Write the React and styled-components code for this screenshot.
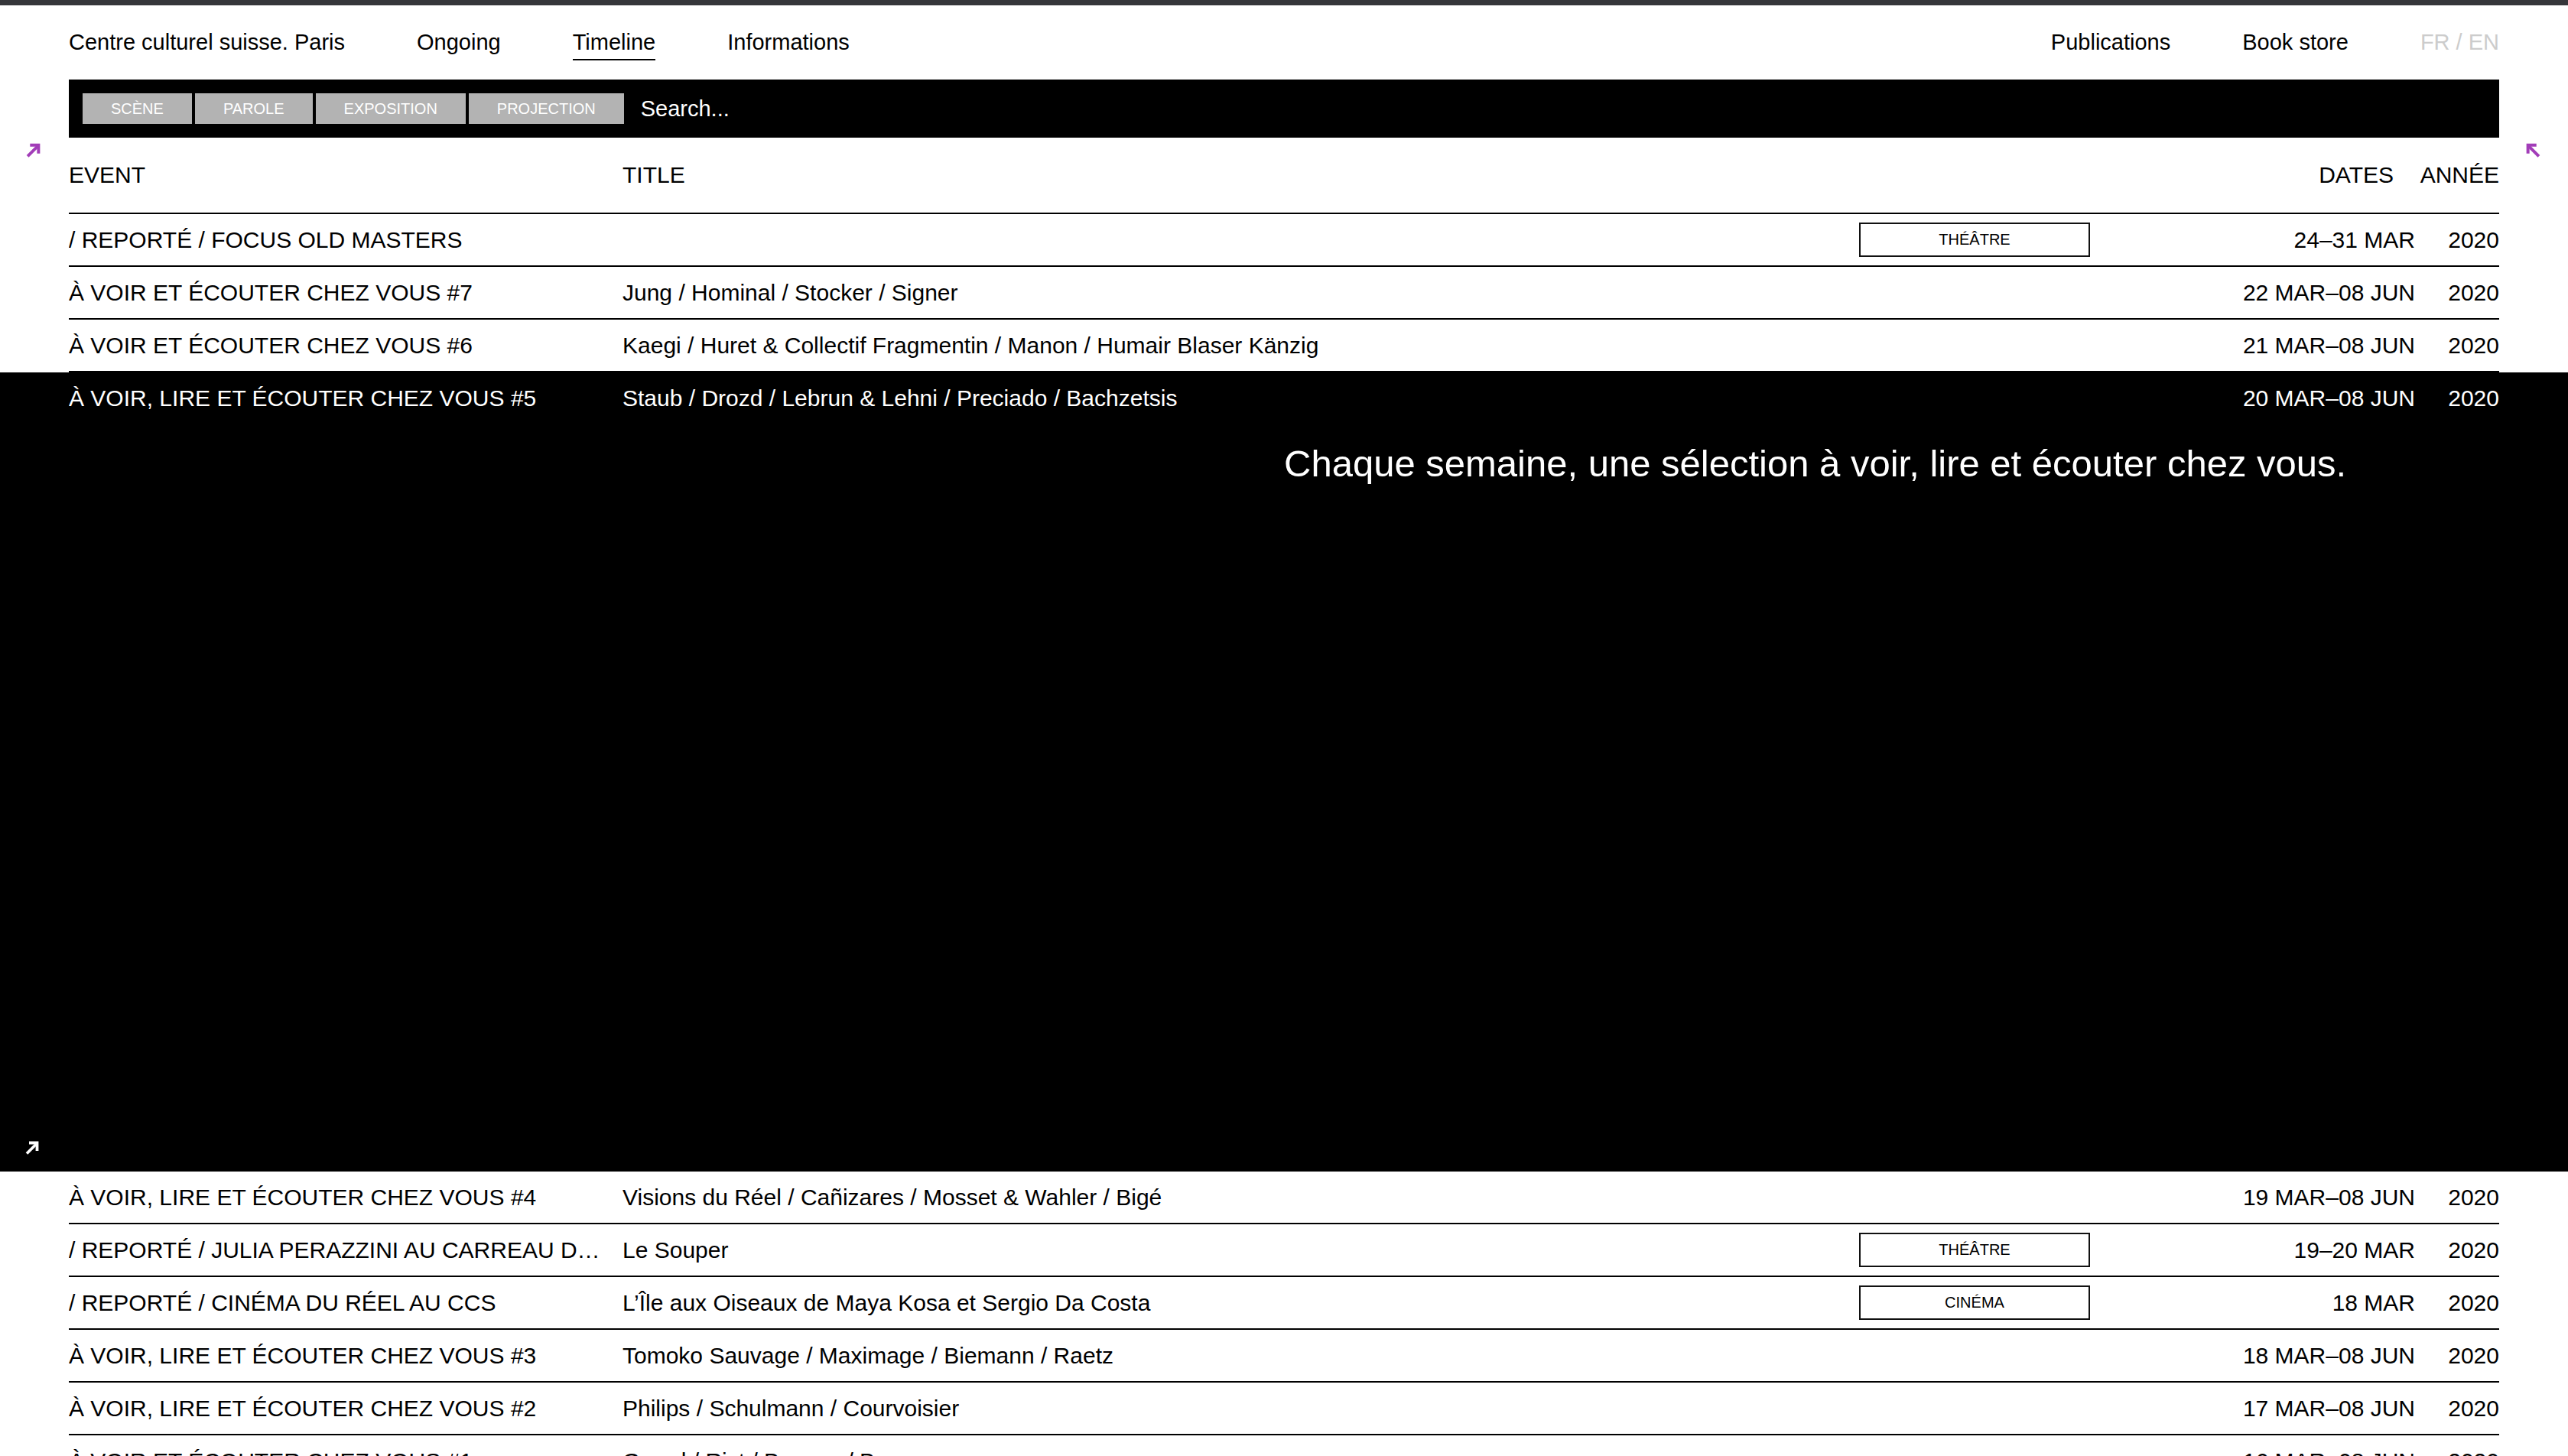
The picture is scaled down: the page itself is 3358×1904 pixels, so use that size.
import React from 'react';
import styled, { createGlobalStyle } from 'styled-components';

const GlobalStyle = createGlobalStyle`
  html, body {
    margin: 0;
    overflow: hidden;
    background: #fff;
  }
  body {
    font-family: "Liberation Sans", Arial, sans-serif;
    color: #000;
  }
  * {
    box-sizing: border-box;
  }
`;

const TopStrip = styled.div`
  height: 7px;
  background-color: #35363a;
`;

const Page = styled.div`
  position: relative;
  padding: 0 90px;
`;

const Nav = styled.nav`
  display: flex;
  justify-content: space-between;
  padding-top: 32px;
`;

const NavGroup = styled.div`
  display: flex;
  gap: 94px;
`;

const NavLink = styled.a`
  font-size: 29px;
  line-height: 33px;
  padding-bottom: 5px;
  border-bottom: 2px solid ${p => (p.$active ? '#000' : 'transparent')};
  color: ${p => (p.$muted ? '#cccccc' : '#000')};
  text-decoration: none;
  cursor: pointer;
`;

const SearchBar = styled.div`
  display: flex;
  align-items: center;
  gap: 4px;
  margin-top: 25px;
  height: 76px;
  padding: 0 18px;
  background-color: #000;
`;

const FilterButton = styled.button`
  height: 40px;
  padding: 0 37px;
  border: none;
  background-color: #b3b3b3;
  color: #fff;
  font-family: inherit;
  font-size: 20px;
  text-transform: uppercase;
`;

const SearchInput = styled.input`
  flex: 1;
  margin-left: 16px;
  border: none;
  background: transparent;
  color: #fff;
  font-family: inherit;
  font-size: 29px;
  outline: none;
  &::placeholder {
    color: #fff;
    opacity: 1;
  }
`;

const Corner = styled.svg`
  position: absolute;
  top: 180px;
  width: 19px;
  height: 19px;
  ${p => (p.$side === 'right' ? 'right: 36px;' : 'left: 34px;')}
`;

const Grid = styled.div`
  display: grid;
  grid-template-columns: 724px 1fr 302px 425px 110px;
  align-items: center;
  font-size: 30px;
  border-bottom: 2px solid #000;
`;

const HeaderRow = styled(Grid)`
  height: 100px;
`;

const Row = styled(Grid)`
  height: 69px;
`;

const Cell = styled.div`
  white-space: nowrap;
  overflow: hidden;
  text-overflow: ellipsis;
  padding-right: ${p => p.$pad || 0}px;
  text-align: ${p => (p.$right ? 'right' : 'left')};
`;

const Tag = styled.div`
  display: flex;
  align-items: center;
  justify-content: center;
  height: 45px;
  border: 2px solid #111;
  font-size: 20px;
  text-transform: uppercase;
`;

const Expanded = styled.div`
  position: relative;
  margin: 0 -90px;
  padding: 0 90px;
  height: 1045px;
  background-color: #000;
  color: #fff;
`;

const Description = styled.p`
  margin: 21px 0 0;
  padding-left: 50%;
  font-size: 49px;
  line-height: 1.2;
`;

const OpenArrow = styled.svg`
  position: absolute;
  left: 33px;
  bottom: 22px;
  width: 18px;
  height: 18px;
`;

function Arrow({ color, flip, as: Comp, ...rest }) {
  return (
    <Comp viewBox="0 0 18 18" {...rest}>
      <g
        fill="none"
        stroke={color}
        strokeWidth="3.8"
        transform={flip ? 'translate(18 0) scale(-1 1)' : undefined}
      >
        <path d="M2 16.5 L15 3.5" />
        <path d="M5 2.5 H15.5 V13" />
      </g>
    </Comp>
  );
}

const events = [
  { event: '/ REPORTÉ / FOCUS OLD MASTERS', title: '', tag: 'Théâtre', dates: '24–31 MAR' },
  { event: 'À VOIR ET ÉCOUTER CHEZ VOUS #7', title: 'Jung / Hominal / Stocker / Signer', dates: '22 MAR–08 JUN' },
  {
    event: 'À VOIR ET ÉCOUTER CHEZ VOUS #6',
    title: 'Kaegi / Huret & Collectif Fragmentin / Manon / Humair Blaser Känzig',
    dates: '21 MAR–08 JUN'
  },
  {
    event: 'À VOIR, LIRE ET ÉCOUTER CHEZ VOUS #5',
    title: 'Staub / Drozd / Lebrun & Lehni / Preciado / Bachzetsis',
    dates: '20 MAR–08 JUN',
    open: true,
    text: 'Chaque semaine, une sélection à voir, lire et écouter chez vous.'
  },
  {
    event: 'À VOIR, LIRE ET ÉCOUTER CHEZ VOUS #4',
    title: 'Visions du Réel / Cañizares / Mosset & Wahler / Bigé',
    dates: '19 MAR–08 JUN'
  },
  {
    event: '/ REPORTÉ / JULIA PERAZZINI AU CARREAU DU TEMPLE',
    title: 'Le Souper',
    tag: 'Théâtre',
    dates: '19–20 MAR'
  },
  {
    event: '/ REPORTÉ / CINÉMA DU RÉEL AU CCS',
    title: 'L’Île aux Oiseaux de Maya Kosa et Sergio Da Costa',
    tag: 'Cinéma',
    dates: '18 MAR'
  },
  {
    event: 'À VOIR, LIRE ET ÉCOUTER CHEZ VOUS #3',
    title: 'Tomoko Sauvage / Maximage / Biemann / Raetz',
    dates: '18 MAR–08 JUN'
  },
  {
    event: 'À VOIR, LIRE ET ÉCOUTER CHEZ VOUS #2',
    title: 'Philips / Schulmann / Courvoisier',
    dates: '17 MAR–08 JUN'
  },
  {
    event: 'À VOIR ET ÉCOUTER CHEZ VOUS #1',
    title: 'Grand / Rist / Besson / Baumann',
    dates: '16 MAR–08 JUN'
  }
];

function EventRow({ item }) {
  return (
    <Row>
      <Cell $pad={12}>{item.event}</Cell>
      <Cell $pad={30}>{item.title}</Cell>
      <div>{item.tag && <Tag>{item.tag}</Tag>}</div>
      <Cell $right>{item.dates}</Cell>
      <Cell $right>2020</Cell>
    </Row>
  );
}

export default function App() {
  return (
    <>
      <GlobalStyle />
      <TopStrip />
      <Page>
        <Nav>
          <NavGroup>
            <NavLink>Centre culturel suisse. Paris</NavLink>
            <NavLink>Ongoing</NavLink>
            <NavLink $active>Timeline</NavLink>
            <NavLink>Informations</NavLink>
          </NavGroup>
          <NavGroup>
            <NavLink>Publications</NavLink>
            <NavLink>Book store</NavLink>
            <NavLink $muted>FR / EN</NavLink>
          </NavGroup>
        </Nav>

        <SearchBar>
          {['Scène', 'Parole', 'Exposition', 'Projection'].map(f => (
            <FilterButton key={f}>{f}</FilterButton>
          ))}
          <SearchInput placeholder="Search..." />
        </SearchBar>

        <Arrow as={Corner} color="#a23db8" />
        <Arrow as={Corner} $side="right" color="#a23db8" flip />

        <HeaderRow>
          <Cell>EVENT</Cell>
          <Cell>TITLE</Cell>
          <div />
          <Cell $right $pad={28}>DATES</Cell>
          <Cell $right>ANNÉE</Cell>
        </HeaderRow>

        {events.map(item =>
          item.open ? (
            <Expanded key={item.event}>
              <EventRow item={item} />
              <Description>{item.text}</Description>
              <Arrow as={OpenArrow} color="#fff" />
            </Expanded>
          ) : (
            <EventRow key={item.event} item={item} />
          )
        )}
      </Page>
    </>
  );
}
